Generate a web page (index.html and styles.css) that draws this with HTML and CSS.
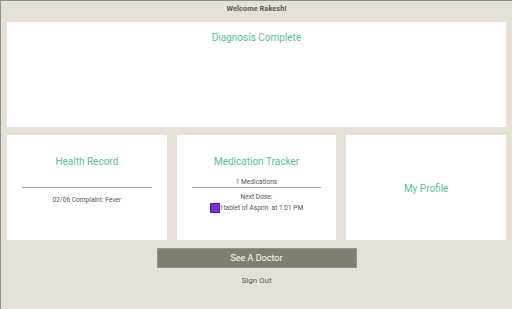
FILE: index.html
```html
<!DOCTYPE html>
<html lang="en">
<head>
    <meta charset="UTF-8">
    <meta name="viewport" content="width=device-width, initial-scale=1.0">
    <title>Home</title>
    <link rel="stylesheet" href="styles.css">
</head>
<body>
    <div class="header">Welcome Rakesh!</div>
    <div class="main">
        <div class="card diagnosis">
            <h2 class="card-title">Diagnosis Complete</h2>
        </div>
        <div class="card-row">
            <div class="card health">
                <h2 class="card-title">Health Record</h2>
                <div class="divider"></div>
                <p class="small-text record">02/06 Complaint: Fever</p>
            </div>
            <div class="card medication">
                <h2 class="card-title">Medication Tracker</h2>
                <p class="small-text med-count">1 Medications</p>
                <p class="small-text next-dose">Next Dose:</p>
                <div class="dose-row">
                    <span class="pill"></span>
                    <span class="small-text">1tablet of Asprin&nbsp; at 1:01 PM</span>
                </div>
            </div>
            <div class="card profile">
                <h2 class="card-title">My Profile</h2>
            </div>
        </div>
        <button type="button" class="doctor-btn">See A Doctor</button>
        <div class="sign-out">Sign Out</div>
    </div>
</body>
</html>
```

FILE: styles.css
```css
html, body {
    height: 100%;
}
body {
    margin: 0;
    font-family: Roboto, "Liberation Sans", sans-serif;
    background-color: #e5e1d9;
    border-top: 1px solid #8f8e8a;
    border-left: 1px solid #8f8e8a;
    box-sizing: border-box;
}
.header {
    height: 21px;
    line-height: 16px;
    text-align: center;
    font-size: 7.5px;
    font-weight: bold;
    color: #5c5a56;
}
.main {
    padding: 0 6px 0 6px;
    display: flex;
    flex-direction: column;
    align-items: center;
}
.card {
    background: white;
    box-sizing: border-box;
    height: 105px;
    text-align: center;
}
.diagnosis {
    width: 100%;
    padding-top: 9px;
}
.card-title {
    margin: 0;
    font-size: 10px;
    line-height: 13px;
    font-weight: normal;
    color: #5cbe95;
}
.card-row {
    width: 100%;
    margin-top: 8px;
    display: grid;
    grid-template-columns: 1fr 1fr 1fr;
    gap: 10px;
}
.small-text {
    margin: 0;
    font-size: 6.6px;
    line-height: 10px;
    color: #555;
}
.health {
    padding: 20px 15px 0 15px;
}
.divider {
    margin-top: 19px;
    border-top: 1px solid #aaa8a3;
}
.record {
    margin-top: 7px;
}
.medication {
    padding: 20px 15px 0 15px;
}
.med-count {
    margin-top: 10px;
    line-height: 9px;
    border-bottom: 1px solid #aaa8a3;
}
.next-dose {
    margin-top: 4px;
}
.dose-row {
    margin-top: 1px;
    display: flex;
    justify-content: center;
    align-items: center;
}
.pill {
    width: 8px;
    height: 8px;
    background-color: #7a2fd0;
    border: 0.5px solid #5a1fa8;
}
.profile {
    display: flex;
    align-items: center;
    justify-content: center;
    padding-top: 2px;
}
.doctor-btn {
    margin-top: 8px;
    width: 200px;
    height: 20px;
    padding: 0;
    background-color: #807e70;
    border: 1px solid #96948a;
    color: white;
    font-family: Roboto, "Liberation Sans", sans-serif;
    font-size: 9px;
}
.sign-out {
    margin-top: 7px;
    font-size: 8px;
    line-height: 12px;
    color: #555;
}
```
